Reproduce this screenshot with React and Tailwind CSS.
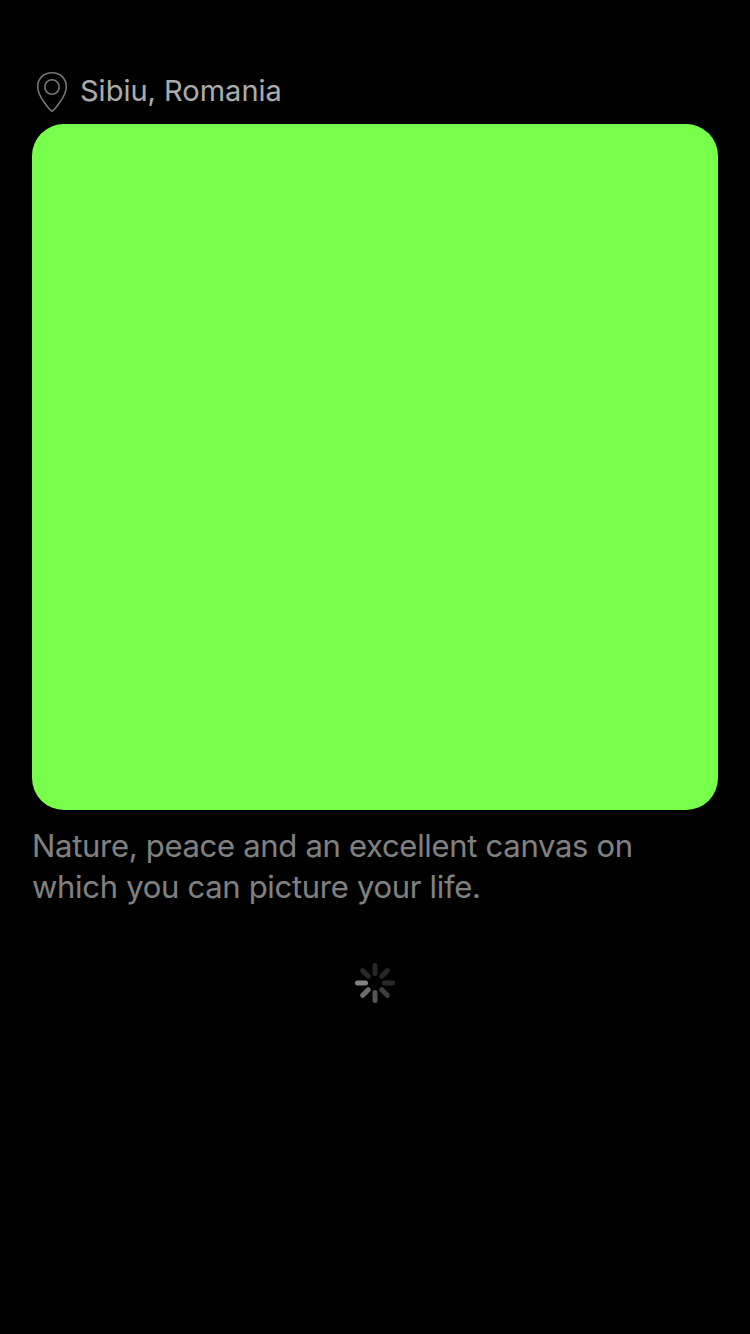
const SPINNER_SPOKES = [
  { angle: 0, color: "#272729" },
  { angle: 45, color: "#272729" },
  { angle: 90, color: "#29292b" },
  { angle: 135, color: "#3e3e40" },
  { angle: 180, color: "#555558" },
  { angle: 225, color: "#6b6b6e" },
  { angle: 270, color: "#838387" },
  { angle: 315, color: "#29292b" },
];

function PinIcon() {
  return (
    <svg className="mt-px ml-1 h-[42px] w-8 shrink-0" viewBox="0 0 32 42" fill="none" stroke="#767676" strokeWidth="1.6">
      <path d="M16 40.200C14 39 1.700 25.500 1.700 16C1.700 7.500 7.800 1.700 16 1.700S30.300 7.500 30.300 16C30.300 25.500 18 39 16 40.200Z" />
      <circle cx="16" cy="16" r="7.2" />
    </svg>
  );
}

function Spinner() {
  return (
    <svg className="mx-auto mt-14 h-10 w-10" viewBox="0 0 40 40" strokeWidth="5" strokeLinecap="round">
      {SPINNER_SPOKES.map(({ angle, color }) => (
        <path key={angle} d="M20 2.500V10.500" stroke={color} transform={`rotate(${angle} 20 20)`} />
      ))}
    </svg>
  );
}

export default function App() {
  return (
    <main className="flex min-h-[1334px] w-full flex-col bg-black px-8 pt-[66px] font-['Inter',sans-serif]">
      <header className="flex h-[50px] items-center">
        <PinIcon />
        <h1 className="ml-3 whitespace-nowrap text-[29px] leading-9 text-white opacity-[0.67]">Sibiu, Romania</h1>
      </header>
      <div className="mt-2 h-[686px] w-full rounded-[32px] bg-[#77ff4c]" />
      <p className="mt-[15px] text-[31px] leading-[41px] tracking-[-0.3px] text-white opacity-50">
        <span className="block whitespace-nowrap">Nature, peace and an excellent canvas on</span>
        <span className="block whitespace-nowrap">which you can picture your life.</span>
      </p>
      <Spinner />
    </main>
  );
}
